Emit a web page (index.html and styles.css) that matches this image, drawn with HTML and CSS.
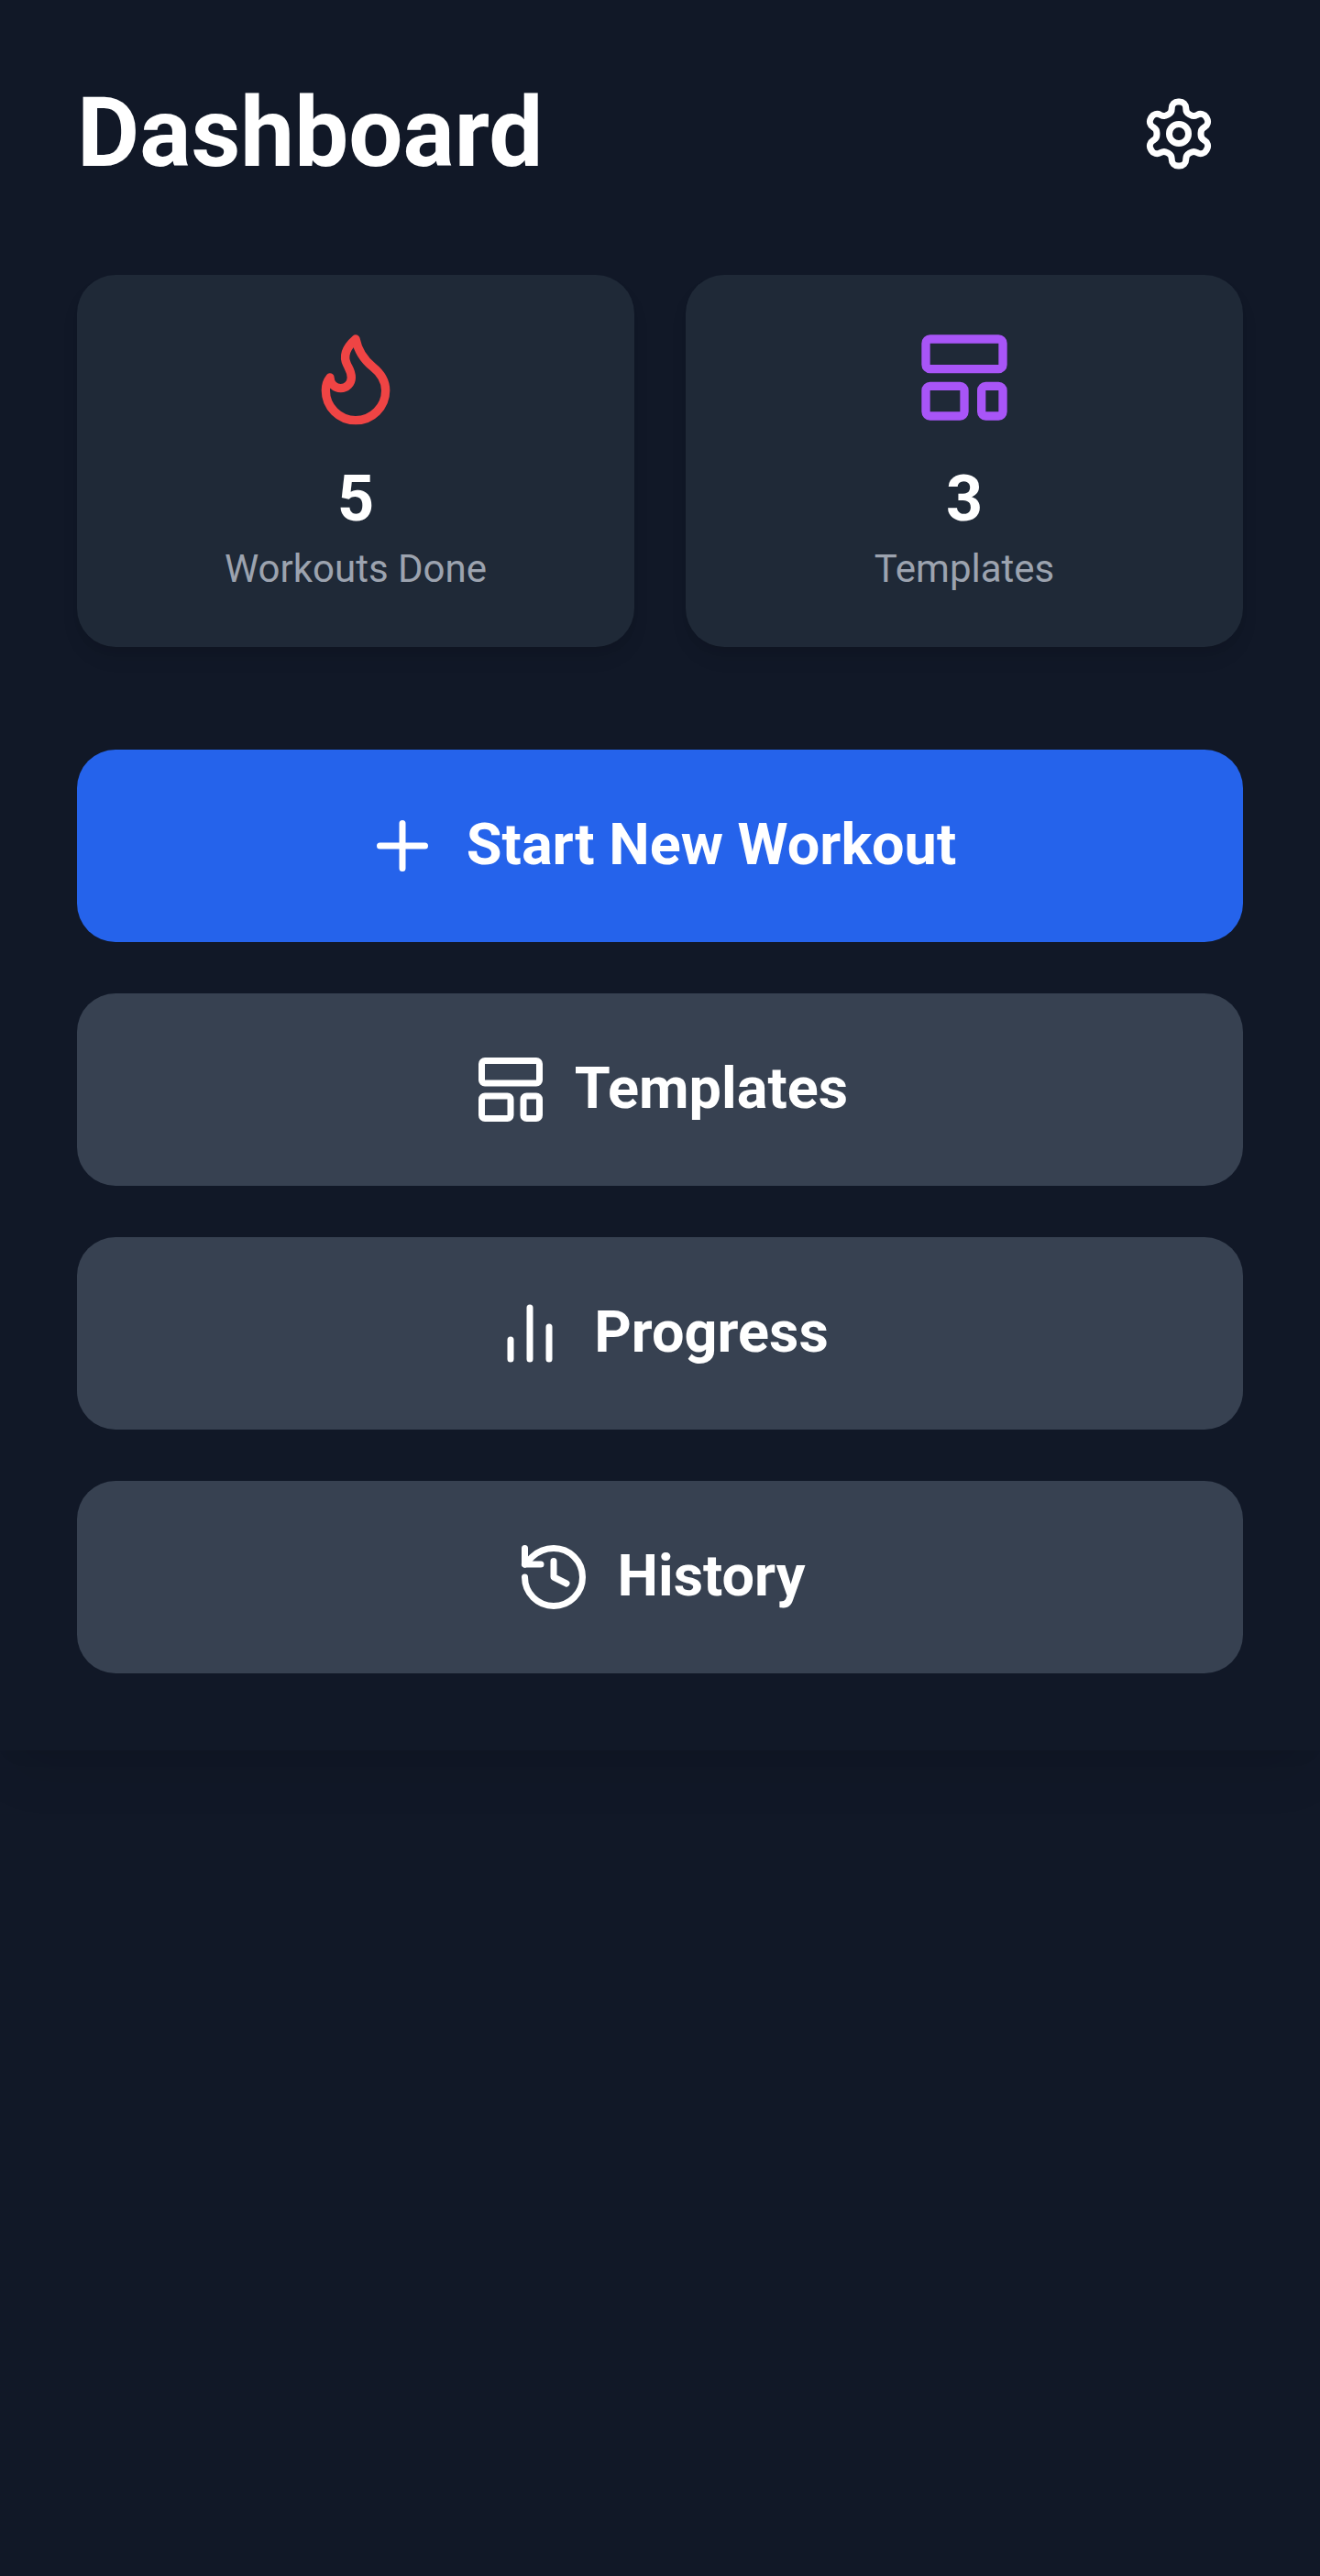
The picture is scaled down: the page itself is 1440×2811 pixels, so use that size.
FILE: index.html
```html
<!DOCTYPE html>
<html lang="en">
<head>
<meta charset="utf-8">
<title>Dashboard</title>
<link rel="stylesheet" href="styles.css">
</head>
<body>
<main class="dashboard">
  <header class="header">
    <h1 class="title">Dashboard</h1>
    <button class="icon-button" aria-label="Settings">
      <svg class="icon" viewBox="0 0 24 24"><path d="M12.22 2h-.44a2 2 0 0 0-2 2v.18a2 2 0 0 1-1 1.73l-.43.25a2 2 0 0 1-2 0l-.15-.08a2 2 0 0 0-2.73.73l-.22.38a2 2 0 0 0 .73 2.73l.15.1a2 2 0 0 1 1 1.72v.51a2 2 0 0 1-1 1.74l-.15.09a2 2 0 0 0-.73 2.73l.22.38a2 2 0 0 0 2.73.73l.15-.08a2 2 0 0 1 2 0l.43.25a2 2 0 0 1 1 1.73V20a2 2 0 0 0 2 2h.44a2 2 0 0 0 2-2v-.18a2 2 0 0 1 1-1.73l.43-.25a2 2 0 0 1 2 0l.15.08a2 2 0 0 0 2.73-.73l.22-.39a2 2 0 0 0-.73-2.73l-.15-.08a2 2 0 0 1-1-1.74v-.5a2 2 0 0 1 1-1.74l.15-.09a2 2 0 0 0 .73-2.73l-.22-.38a2 2 0 0 0-2.73-.73l-.15.08a2 2 0 0 1-2 0l-.43-.25a2 2 0 0 1-1-1.73V4a2 2 0 0 0-2-2z"/><circle cx="12" cy="12" r="3"/></svg>
    </button>
  </header>

  <section class="stats">
    <div class="stat-card">
      <svg class="icon stat-icon stat-icon--red" viewBox="0 0 24 24"><path d="M8.5 14.5A2.5 2.5 0 0 0 11 12c0-1.38-.5-2-1-3-1.072-2.143-.224-4.054 2-6 .5 2.5 2 4.9 4 6.5 2 1.6 3 3.5 3 5.5a7 7 0 1 1-14 0c0-1.153.433-2.294 1-3a2.5 2.5 0 0 0 2.5 2.5z"/></svg>
      <div class="stat-value">5</div>
      <div class="stat-label">Workouts Done</div>
    </div>
    <div class="stat-card">
      <svg class="icon stat-icon stat-icon--purple" viewBox="0 0 24 24"><rect width="18" height="7" x="3" y="3" rx="1"/><rect width="9" height="7" x="3" y="14" rx="1"/><rect width="5" height="7" x="16" y="14" rx="1"/></svg>
      <div class="stat-value">3</div>
      <div class="stat-label">Templates</div>
    </div>
  </section>

  <nav class="actions">
    <button class="action action--primary">
      <svg class="icon" viewBox="0 0 24 24"><path d="M5 12h14M12 5v14"/></svg>
      <span class="action-label">Start New Workout</span>
    </button>
    <button class="action">
      <svg class="icon" viewBox="0 0 24 24"><rect width="18" height="7" x="3" y="3" rx="1"/><rect width="9" height="7" x="3" y="14" rx="1"/><rect width="5" height="7" x="16" y="14" rx="1"/></svg>
      <span class="action-label">Templates</span>
    </button>
    <button class="action">
      <svg class="icon" viewBox="0 0 24 24"><path d="M18 20V10M12 20V4M6 20v-6"/></svg>
      <span class="action-label">Progress</span>
    </button>
    <button class="action">
      <svg class="icon" viewBox="0 0 24 24"><path d="M3 12a9 9 0 1 0 9-9 9.75 9.75 0 0 0-6.74 2.74L3 8"/><path d="M3 3v5h5"/><path d="M12 7v5l4 2"/></svg>
      <span class="action-label">History</span>
    </button>
  </nav>
</main>
</body>
</html>
```

FILE: styles.css
```css
* {
  box-sizing: border-box;
}

body {
  margin: 0;
  min-height: 100vh;
  background: #111827;
  color: #fff;
  font-family: Roboto, sans-serif;
  overflow-x: hidden;
}

button {
  border: 0;
  margin: 0;
  color: inherit;
  font: inherit;
  cursor: pointer;
}

.dashboard {
  padding: 76px 84px 84px;
  background: #111827;
  box-shadow: 0 35px 52.5px -10.5px rgba(0, 0, 0, 0.08), 0 14px 21px -14px rgba(0, 0, 0, 0.08);
}

.header {
  display: flex;
  align-items: center;
  justify-content: space-between;
  margin-bottom: 84px;
}

.title {
  margin: 0;
  padding-bottom: 1px;
  font-size: 105px;
  line-height: 126px;
  font-weight: 700;
}

.icon-button {
  display: flex;
  padding: 28px;
  background: none;
}

.icon {
  display: block;
  flex: none;
  width: 84px;
  height: 84px;
  fill: none;
  stroke: currentColor;
  stroke-width: 2;
  stroke-linecap: round;
  stroke-linejoin: round;
}

.stats {
  display: grid;
  grid-template-columns: 1fr 1fr;
  gap: 56px;
  margin-bottom: 112px;
}

.stat-card {
  display: flex;
  flex-direction: column;
  align-items: center;
  padding: 56px;
  border-radius: 42px;
  background: #1f2937;
  box-shadow: 0 14px 21px -3.5px rgba(0, 0, 0, 0.08), 0 7px 14px -7px rgba(0, 0, 0, 0.08);
}

.stat-icon {
  width: 112px;
  height: 112px;
  margin-bottom: 28px;
}

.stat-icon--red {
  color: #ef4444;
}

.stat-icon--purple {
  color: #a855f7;
}

.stat-value {
  padding-bottom: 2px;
  font-size: 70px;
  line-height: 96px;
  font-weight: 700;
}

.stat-label {
  padding-bottom: 3px;
  font-size: 42px;
  line-height: 53px;
  color: #9ca3af;
}

.actions {
  display: grid;
  gap: 56px;
}

.action {
  display: flex;
  align-items: center;
  justify-content: center;
  gap: 28px;
  height: 210px;
  border-radius: 42px;
  background: #374151;
  font-size: 63px;
  line-height: 98px;
  font-weight: 700;
}

.action--primary {
  background: #2563eb;
}

.action-label {
  padding-bottom: 3px;
}
```
